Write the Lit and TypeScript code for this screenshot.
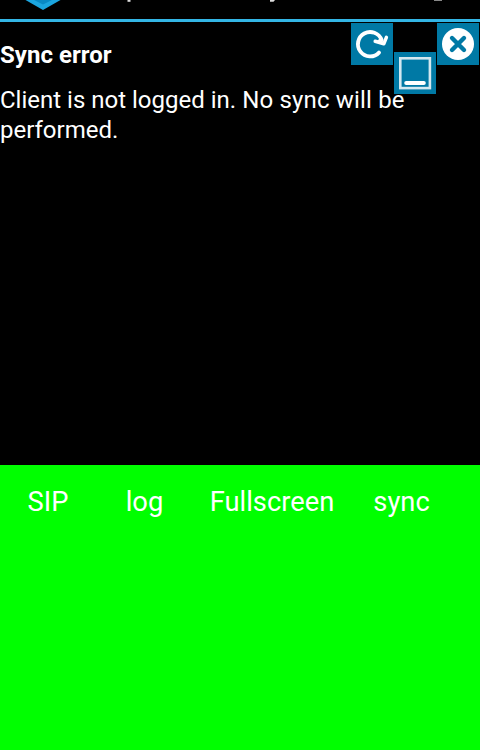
import { LitElement, html, css, svg } from "lit";
import { customElement } from "lit/decorators.js";

const refreshIcon = svg`
  <path d="M28 29.6A12.2 12.2 0 1 1 30.6 17" fill="none" stroke="#fff" stroke-width="3.9" stroke-linecap="round"/>
  <path d="M24.2 18.2L32.8 20.8L35.4 14.4" fill="none" stroke="#fff" stroke-width="3.5" stroke-linecap="round" stroke-linejoin="round"/>
  <path d="M29.5 14L32.8 20.8L26 18.6Z" fill="#fff"/>`;

const minimizeIcon = svg`
  <rect x="6.3" y="6.3" width="29.6" height="29.8" fill="none" stroke="#d3e8f0" stroke-width="2.6"/>
  <path d="M12.2 31H29.8" stroke="#fff" stroke-width="4" stroke-linecap="round"/>`;

const closeIcon = svg`
  <circle cx="21" cy="21" r="16" fill="#fff"/>
  <path d="M15 15L27 27M27 15L15 27" stroke="#0079a5" stroke-width="4.4" stroke-linecap="round"/>`;

@customElement("app-root")
export class AppRoot extends LitElement {
  static styles = css`
    :host {
      display: flex;
      flex-direction: column;
      position: relative;
      width: 480px;
      height: 750px;
      overflow: hidden;
      background: #000;
      color: #fff;
      font-family: Roboto, sans-serif;
    }
    svg { display: block; }
    .bar {
      box-sizing: border-box;
      height: 22px;
      flex: none;
      border-bottom: 3px solid #33b5e5;
    }
    .message {
      height: 443px;
      box-sizing: border-box;
      padding-top: 18px;
      font-size: 24px;
      line-height: 30px;
      flex: none;
    }
    h1 { margin: 0 0 15px; font-size: 24px; line-height: 30px; font-weight: 700; letter-spacing: 0.04px; }
    p { margin: 0; width: 420px; }
    .detail { letter-spacing: 0.17px; }
    .panel {
      flex: 1;
      background: #0f0;
      display: grid;
      grid-template-columns: 96px 97px 158px 101px;
      align-content: start;
      justify-items: center;
      padding-top: 21px;
      font-size: 27.3px;
      line-height: 32px;
    }
    .tool {
      position: absolute;
      top: 23px;
      width: 42px;
      height: 42px;
      background: #0079a5;
    }
    .refresh { left: 351px; }
    .minimize { left: 394px; top: 52px; }
    .close { left: 437px; }
  `;

  render() {
    return html`
      <div class="bar">
        <svg width="480" height="19" viewBox="0 0 480 19">
          <path d="M25.5 0H60.5L43 10Z" fill="#1ba5df"/>
          <path d="M34 0H52L43 4.6Z" fill="#0989c4"/>
          <rect x="127.5" y="0" width="3" height="1.8" fill="#ddd"/>
          <path d="M270 0H275L273.5 1.8H270Z" fill="#ddd"/>
          <rect x="434" y="0" width="8" height="1" fill="#888"/>
        </svg>
      </div>
      <div class="message">
        <h1>Sync error</h1>
        <p>Client is not logged in.<span class="detail"> No sync will be</span> performed.</p>
      </div>
      <div class="panel">
        <span>SIP</span><span>log</span><span>Fullscreen</span><span>sync</span>
      </div>
      <div class="tool refresh"><svg width="42" height="42">${refreshIcon}</svg></div>
      <div class="tool close"><svg width="42" height="42">${closeIcon}</svg></div>
      <div class="tool minimize"><svg width="42" height="42">${minimizeIcon}</svg></div>
    `;
  }
}
